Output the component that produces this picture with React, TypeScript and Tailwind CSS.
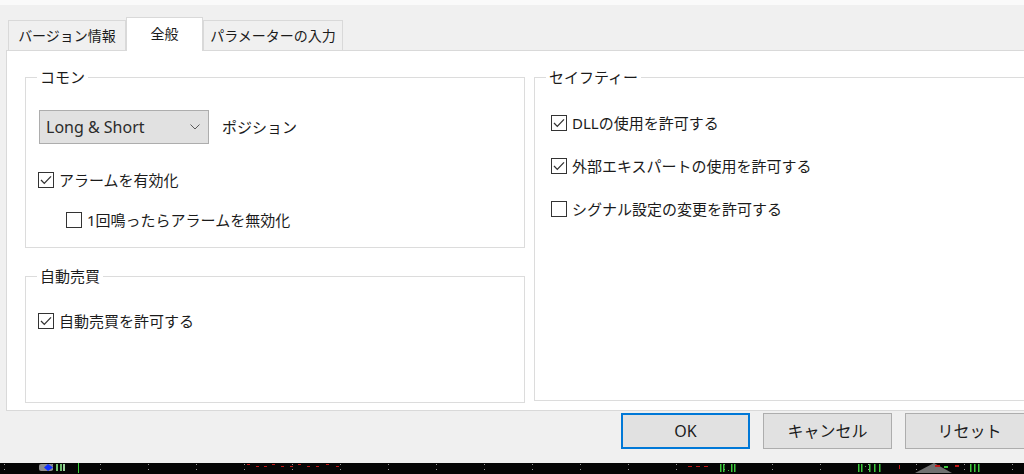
import React from "react";

const Check = ({checked}: { checked?: boolean }) => (
    <span className="w-[16px] h-[16px] border border-[#333333] bg-white flex items-center justify-center shrink-0">
        {checked && (
            <svg width="12" height="10" viewBox="0 0 12 10">
                <path d="M1 5 L4.3 8.4 L11 1.4" fill="none" stroke="#333333" strokeWidth="1.3"/>
            </svg>
        )}
    </span>
)

const CheckRow = ({checked, label, className}: { checked?: boolean, label: string, className?: string }) => (
    <div className={"flex items-center gap-[5px] h-[20px] " + (className ?? "")}>
        <Check checked={checked}/>
        <span className="text-[15px] leading-[20px] text-[#1b1b1b] whitespace-nowrap">{label}</span>
    </div>
)

// legend sits relative to the fieldset padding, so pull it back left
const Legend = ({children, className}: { children: React.ReactNode, className?: string }) => (
    <legend className={"px-[3px] text-[15px] leading-[20px] text-[#1b1b1b] " + (className ?? "")}>{children}</legend>
)

const Tab = ({label, active, w}: { label: string, active?: boolean, w: string }) => (
    <div
        className={
            active
                ? `relative z-10 -mb-px h-[34px] bg-white border border-b-0 border-[#d9d9d9] flex items-center justify-center pb-[3px] text-[14px] text-[#1b1b1b] ${w}`
                : `h-[30px] bg-[#f0f0f0] border border-b-0 border-[#d9d9d9] flex items-center justify-center text-[14px] text-[#1b1b1b] ${w}`
        }
    >
        {label}
    </div>
)

const ChartStrip = () => {
    const dots = Array.from({length: 22}, (_, i) => 4 + i * 48)
    return (
        <svg width="1024" height="11" viewBox="0 0 1024 11" className="block">
            <rect width="1024" height="11" fill="#050505"/>
            {dots.map(x => (
                <g key={x}>
                    <rect x={x} y="1" width="1" height="1" fill="#9a9a9a"/>
                    <rect x={x} y="6" width="1" height="1" fill="#9a9a9a"/>
                </g>
            ))}
            <rect x="39" y="1" width="14" height="7" rx="2" fill="#8c8c8c"/>
            <path d="M48 1 L53 4.5 L48 8 L44 4.5 Z" fill="#1030ff"/>
            <rect x="56" y="1" width="2" height="7" fill="#6fbf6f"/>
            <rect x="60" y="1" width="2" height="7" fill="#6fbf6f"/>
            <rect x="63" y="1" width="2" height="7" fill="#9ad09a"/>
            <rect x="78" y="0" width="1" height="10" fill="#39d039"/>
            {[247, 256, 264, 272, 281, 290, 298, 307, 316, 326, 336].map((x, i) => (
                <rect key={x} x={x} y={i % 3 === 0 ? 1 : 3} width="3" height="1" fill="#c01818"/>
            ))}
            {[688, 696, 704].map(x => <rect key={x} x={x} y="3" width="4" height="1" fill="#c01818"/>)}
            {[720, 723, 731, 734].map(x => <rect key={x} x={x} y="1" width="1.5" height="8" fill="#3cc83c"/>)}
            <rect x="728" y="7" width="1" height="1" fill="#3cc83c"/>
            {[858, 861, 869, 874, 879].map(x => <rect key={x} x={x} y="1" width="1.5" height="8" fill="#3cc83c"/>)}
            <rect x="865" y="3" width="1" height="1" fill="#3cc83c"/>
            <rect x="899" y="2" width="1" height="4" fill="#c01818"/>
            <path d="M915 10 L934 0 L952 10 Z" fill="#707070"/>
            <rect x="935" y="2" width="5" height="2" fill="#c01818"/>
            <rect x="944" y="3" width="4" height="2" fill="#3cc83c"/>
            <rect x="955" y="2" width="4" height="2" fill="#c01818"/>
            {[970, 974, 978].map(x => <rect key={x} x={x} y="1" width="1.5" height="8" fill="#3cc83c"/>)}
        </svg>
    )
}

export default function App() {
    return (
        <div
            className="w-[1024px] h-[474px] overflow-hidden bg-[#f0f0f0] flex flex-col font-[family-name:'Noto_Sans','Noto_Sans_CJK_JP',sans-serif]">
            <div className="h-[5px] bg-[#fafafa] shrink-0"/>

            {/* tabs */}
            <div className="h-[45px] flex items-end pl-[8px] shrink-0">
                <Tab label="バージョン情報" w="w-[118px]"/>
                <Tab label="全般" active w="w-[77px]"/>
                <Tab label="パラメーターの入力" w="w-[140px]"/>
            </div>

            {/* panel */}
            <div className="ml-[6px] w-[1040px] h-[361px] shrink-0 bg-white border border-[#d9d9d9] pt-[16px] pl-[18px] flex gap-[9px]">
                <div className="w-[500px] flex flex-col gap-[18px]">
                    <fieldset className="h-[181px] border border-[#dcdcdc] pl-[12px]">
                        <Legend className="-ml-px">コモン</Legend>
                        <div className="mt-[23px] flex items-center gap-[13px]">
                            <div className="ml-[1px] w-[170px] h-[34px] bg-[#e1e1e1] border border-[#adadad] flex items-center justify-between pl-[6px] pr-[8px]">
                                <span className="text-[16px] text-[#2b2b2b]">Long &amp; Short</span>
                                <svg width="10" height="6" viewBox="0 0 10 6">
                                    <path d="M0.5 0.5 L5 5 L9.5 0.5" fill="none" stroke="#5a5a5a" strokeWidth="1"/>
                                </svg>
                            </div>
                            <span className="text-[15px] text-[#1b1b1b]">ポジション</span>
                        </div>
                        <CheckRow checked label="アラームを有効化" className="mt-[26px]"/>
                        <CheckRow label="1回鳴ったらアラームを無効化" className="mt-[20px] ml-[28px]"/>
                    </fieldset>

                    <fieldset className="h-[137px] border border-[#dcdcdc] pl-[12px]">
                        <Legend className="-ml-px">自動売買</Legend>
                        <CheckRow checked label="自動売買を許可する" className="mt-[25px]"/>
                    </fieldset>
                </div>

                <fieldset className="flex-1 h-[334px] border border-[#dcdcdc] pl-[16px]">
                    <Legend className="-ml-[5px]">セイフティー</Legend>
                    <CheckRow checked label="DLLの使用を許可する" className="mt-[26px]"/>
                    <CheckRow checked label="外部エキスパートの使用を許可する" className="mt-[23px]"/>
                    <CheckRow label="シグナル設定の変更を許可する" className="mt-[23px]"/>
                </fieldset>
            </div>

            {/* buttons */}
            <div className="h-[52px] shrink-0 pt-[2px] flex justify-end gap-[13px] -mr-[10px]">
                <button className="w-[129px] h-[36px] shrink-0 bg-[#e1e1e1] border-2 border-[#0078d7] text-[16px] text-[#1b1b1b]">OK</button>
                <button className="w-[129px] h-[36px] shrink-0 bg-[#e1e1e1] border border-[#adadad] text-[16px] text-[#1b1b1b]">キャンセル</button>
                <button className="w-[129px] h-[36px] shrink-0 bg-[#e1e1e1] border border-[#adadad] text-[16px] text-[#1b1b1b]">リセット</button>
            </div>

            <ChartStrip/>
        </div>
    )
}
